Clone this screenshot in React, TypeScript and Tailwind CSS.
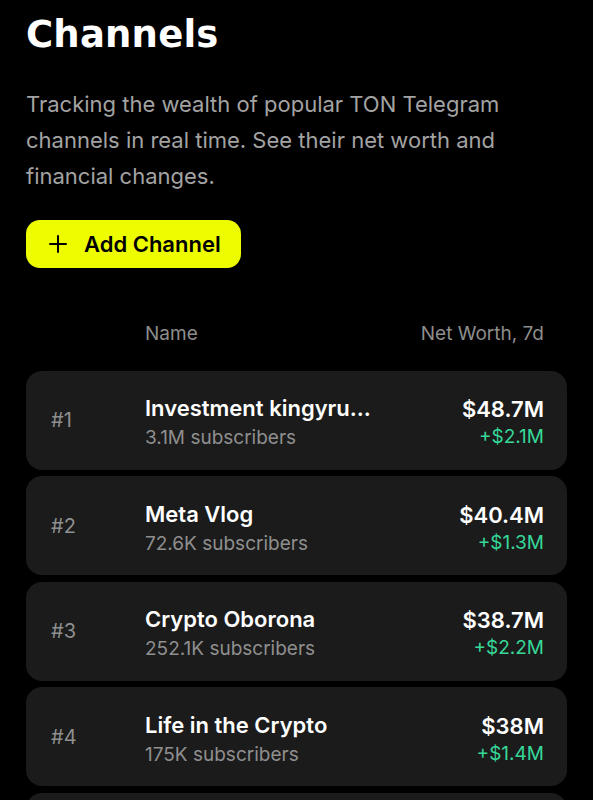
import React from "react";

const rows = [
  { rank: "#1", name: "Investment kingyru...", subs: "3.1M subscribers", worth: "$48.7M", change: "+$2.1M" },
  { rank: "#2", name: "Meta Vlog", subs: "72.6K subscribers", worth: "$40.4M", change: "+$1.3M" },
  { rank: "#3", name: "Crypto Oborona", subs: "252.1K subscribers", worth: "$38.7M", change: "+$2.2M" },
  { rank: "#4", name: "Life in the Crypto", subs: "175K subscribers", worth: "$38M", change: "+$1.4M" },
];

export default function App() {
  return (
    <div className="min-h-screen w-full bg-black text-white overflow-hidden" style={{ fontFamily: "Inter, 'Noto Sans', sans-serif" }}>
      <div className="h-[800px] overflow-hidden px-[26px] pt-[13px]">
        <h1
          className="text-[37px] leading-[44px] font-bold tracking-[0.2px]"
          style={{ fontFamily: "'DejaVu Sans', sans-serif" }}
        >
          Channels
        </h1>
        <p className="mt-[29px] text-[22px] leading-[36px] text-[#a3a3a3]">
          Tracking the wealth of popular TON Telegram channels in real time. See their net worth and financial changes.
        </p>
        <button className="mt-[26px] h-[48px] w-[215px] rounded-[14px] bg-[#eefc00] text-black flex items-center pl-[22px] gap-[16px]">
          <svg width="20" height="20" viewBox="0 0 20 20" fill="none" stroke="black" strokeWidth="2" strokeLinecap="round">
            <path d="M10 2v16M2 10h16" />
          </svg>
          <span className="text-[22px] font-semibold">Add Channel</span>
        </button>
        <div className="mt-[52px] flex items-center text-[19px] text-[#8d8d8d] pl-[119px] pr-[23px]">
          <span className="flex-1">Name</span>
          <span>Net Worth, 7d</span>
        </div>
        <div className="mt-[22px] flex flex-col gap-[6.67px]">
          {rows.map((r) => (
            <div key={r.rank} className="h-[99px] rounded-[16px] bg-[#1b1b1b] flex items-center pl-[25px] pr-[23px]">
              <div className="w-[94px] text-[20px] text-[#8f8f8f]">{r.rank}</div>
              <div className="flex-1 flex flex-col pt-[4px]">
                <span className="text-[22px] leading-[30px] font-semibold text-white">{r.name}</span>
                <span className="text-[19px] leading-[26px] text-[#8f8f8f] mt-[2px]">{r.subs}</span>
              </div>
              <div className="flex flex-col items-end pt-[4px]">
                <span className="text-[22px] leading-[30px] font-semibold text-white">{r.worth}</span>
                <span className="text-[19px] leading-[26px] text-[#36d899]">{r.change}</span>
              </div>
            </div>
          ))}
          <div className="h-[99px] rounded-[16px] bg-[#1b1b1b]" />
        </div>
      </div>
    </div>
  );
}
